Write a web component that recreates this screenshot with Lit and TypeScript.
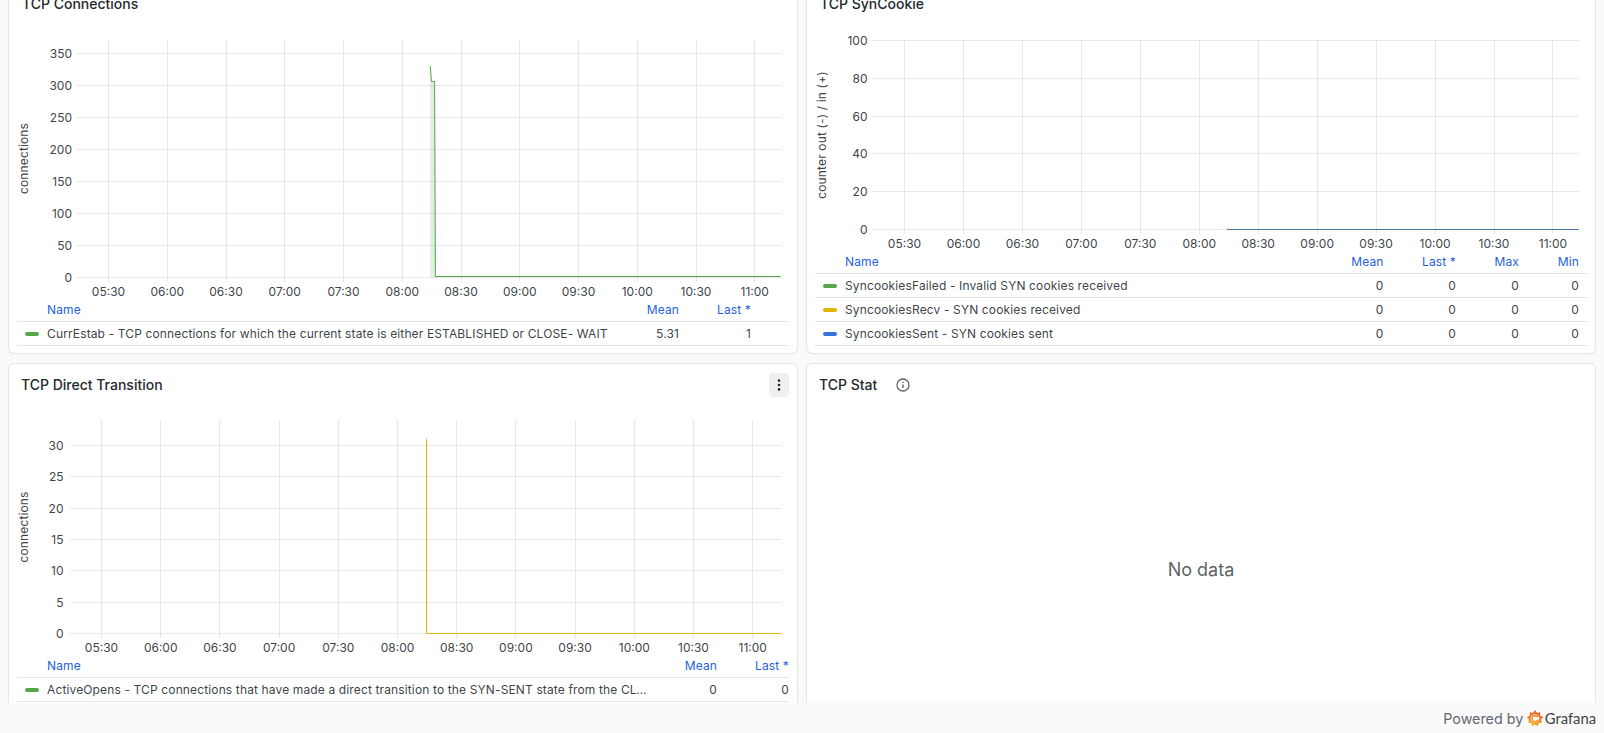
import { LitElement, html, svg, css } from 'lit';
import { customElement, property } from 'lit/decorators.js';

interface Series {
  color: string;
  // points are in page pixels, same space as the chart's viewBox
  points: string;
  fill?: string;
}

interface ChartConfig {
  ox: number;
  oy: number;
  height: number;
  left: number;
  right: number;
  top: number;
  zero: number;
  yStep: number;
  yLabels: string[];
  labelX: number;
  axisLabel: string;
  axisX: number;
  axisY: number;
  x0: number;
  xStep: number;
  xLabelY: number;
  series: Series[];
}

interface LegendRow {
  color: string;
  name: string;
  values: string[];
}

const TIMES = ['05:30', '06:00', '06:30', '07:00', '07:30', '08:00', '08:30', '09:00', '09:30', '10:00', '10:30', '11:00'];
const BORDER_GREEN = '#56a64b';
const YELLOW = '#e0b400';
const BLUE = '#3274d9';

@customElement('ts-chart')
export class TsChart extends LitElement {
  static styles = css`
    :host { display: block; flex: none; }
    svg { display: block; }
    .grid { stroke: rgba(36, 41, 46, 0.105); stroke-width: 1; shape-rendering: crispEdges; }
    .tick { font: 400 12px Inter, sans-serif; fill: rgba(36, 41, 46, 0.9); }
    .axis { letter-spacing: 0.15px; }
    .data { fill: none; stroke-width: 1; }
  `;

  @property({ attribute: false }) config!: ChartConfig;

  render() {
    const c = this.config;
    const width = 788;
    return html`<svg width=${width} height=${c.height} viewBox="${c.ox} ${c.oy} ${width} ${c.height}">
      ${TIMES.map((t, i) => {
        const x = c.x0 + i * c.xStep;
        return svg`
          <line class="grid" x1=${x} x2=${x} y1=${c.top} y2=${c.zero + 4}></line>
          <text class="tick" x=${x} y=${c.xLabelY} text-anchor="middle" dominant-baseline="central">${t}</text>`;
      })}
      ${c.yLabels.map((t, i) => {
        const y = c.zero - i * c.yStep;
        return svg`
          <line class="grid" x1=${c.left} x2=${c.right} y1=${y} y2=${y}></line>
          <text class="tick" x=${c.labelX} y=${y} text-anchor="end" dominant-baseline="central">${t}</text>`;
      })}
      <text class="tick axis" transform="rotate(-90 ${c.axisX} ${c.axisY})" x=${c.axisX} y=${c.axisY}
        text-anchor="middle" dominant-baseline="central">${c.axisLabel}</text>
      ${c.series.map((s) => svg`
        ${s.fill ? svg`<path d=${s.fill} fill=${s.color} fill-opacity="0.18"></path>` : ''}
        <polyline class="data" points=${s.points} stroke=${s.color}></polyline>`)}
    </svg>`;
  }
}

@customElement('legend-table')
export class LegendTable extends LitElement {
  static styles = css`
    :host { display: block; flex: none; margin: 0 8px; font: 400 12px Inter, sans-serif; letter-spacing: 0.135px; color: rgba(36, 41, 46, 0.9); }
    .row { display: grid; height: 23px; align-items: center; border-bottom: 1px solid rgba(36, 41, 46, 0.12); white-space: nowrap; }
    .head { height: 24px; color: #1f62e0; }
    .name { display: flex; align-items: center; gap: 8px; padding-left: 8px; min-width: 0; }
    .head .name { padding-left: 30px; }
    .marker { flex: none; width: 14px; height: 4px; border-radius: 2px; }
    .label { overflow: hidden; text-overflow: ellipsis; }
    .num { text-align: right; }
  `;

  @property({ attribute: false }) columns: string[] = [];
  @property({ attribute: false }) rows: LegendRow[] = [];
  @property() widths = '';

  render() {
    const style = `grid-template-columns:${this.widths}`;
    return html`
      <div class="row head" style=${style}>
        <div class="name"><span class="label">Name</span></div>
        ${this.columns.map((c) => html`<div class="num">${c}</div>`)}
      </div>
      ${this.rows.map((r) => html`
        <div class="row" style=${style}>
          <div class="name">
            <span class="marker" style="background:${r.color}"></span>
            <span class="label">${r.name}</span>
          </div>
          ${r.values.map((v) => html`<div class="num">${v}</div>`)}
        </div>`)}
    `;
  }
}

const connectionsChart: ChartConfig = {
  ox: 9, oy: 24, height: 273,
  left: 77, right: 780.5, top: 40, zero: 277.5, yStep: 32,
  yLabels: ['0', '50', '100', '150', '200', '250', '300', '350'],
  labelX: 72,
  axisLabel: 'connections', axisX: 23, axisY: 158.5,
  x0: 108.5, xStep: 58.75, xLabelY: 291.5,
  series: [{
    color: BORDER_GREEN,
    points: '430.3,66 431.4,81.5 434.6,81.5 435.4,276.5 780.5,276.5',
    fill: 'M430.3 66L431.4 81.3L434.6 81.3L435.8 277.5L430.3 277.5Z',
  }],
};

const synCookieChart: ChartConfig = {
  ox: 807, oy: 24, height: 225,
  left: 873, right: 1579, top: 40, zero: 229.5, yStep: 37.8,
  yLabels: ['0', '20', '40', '60', '80', '100'],
  labelX: 867.5,
  axisLabel: 'counter out (-) / in (+)', axisX: 821, axisY: 135,
  x0: 904.5, xStep: 58.95, xLabelY: 243.5,
  series: [{ color: '#44779f', points: '1227,229.5 1579,229.5' }],
};

const directChart: ChartConfig = {
  ox: 9, oy: 404, height: 249,
  left: 69.5, right: 780.5, top: 420, zero: 633.5, yStep: 31.33,
  yLabels: ['0', '5', '10', '15', '20', '25', '30'],
  labelX: 63.5,
  axisLabel: 'connections', axisX: 23, axisY: 527,
  x0: 101.5, xStep: 59.2, xLabelY: 647.5,
  series: [{ color: YELLOW, points: '426.5,439 426.5,633.5 780.5,633.5' }],
};

@customElement('app-root')
export class AppRoot extends LitElement {
  static styles = css`
    :host { display: flex; flex-direction: column; height: 733px; overflow: hidden; background: #fafafa; color: #24292e; font-family: Inter, sans-serif; }
    .scroll { flex: 1; min-height: 0; overflow: hidden; }
    .grid { display: grid; grid-template-columns: 790px 790px; grid-template-rows: 371px 371px; column-gap: 8px; row-gap: 9px; margin: -17px 8px 0; }
    .panel { display: flex; flex-direction: column; box-sizing: border-box; background: #fff; border: 1px solid rgba(36, 41, 46, 0.12); border-radius: 6px; overflow: hidden; }
    .header { flex: none; display: flex; align-items: center; height: 40px; padding: 0 8px 0 13px; }
    .header.low { height: 38px; padding: 2px 8px 0 12px; }
    .title { font-size: 14px; font-weight: 500; line-height: 22px; white-space: nowrap; }
    .info { margin-left: 19px; color: #5f646b; display: block; }
    .menu { margin-left: auto; width: 20px; height: 24px; border-radius: 4px; background: #f0f0f0; display: flex; align-items: center; justify-content: center; }
    .nodata { flex: none; height: 330px; display: flex; align-items: center; justify-content: center; font-size: 18px; color: rgba(36, 41, 46, 0.75); }
    footer { flex: none; height: 30px; display: flex; align-items: center; justify-content: flex-end; padding-right: 8px; background: #fafafa; font-size: 14.3px; color: #626870; }
    .logo { margin-left: 4px; display: block; }
    .brand { margin-left: 1.5px; font: 400 14.8px Lato, sans-serif; color: #3d4248; }
  `;

  private logo() {
    // gear teeth around the ring, coloured by height so the mark runs orange to yellow
    const teeth = Array.from({ length: 9 }, (_, i) => {
      const a = (i * 40 * Math.PI) / 180;
      const pt = (r: number, off: number) =>
        `${(8 + r * Math.sin(a + off)).toFixed(2)},${(8.5 - r * Math.cos(a + off)).toFixed(2)}`;
      return `${pt(6, -0.34)} ${pt(8.2, 0)} ${pt(6, 0.34)}`;
    });
    return html`<svg class="logo" width="16" height="17" viewBox="0 0 16 17">
      <defs>
        <linearGradient id="gf" gradientUnits="userSpaceOnUse" x1="4" y1="17" x2="9" y2="0">
          <stop offset="0" stop-color="#fcc20d"></stop>
          <stop offset="0.4" stop-color="#f58a1f"></stop>
          <stop offset="1" stop-color="#ee5228"></stop>
        </linearGradient>
      </defs>
      ${teeth.map((p) => svg`<polygon points=${p} fill="url(#gf)"></polygon>`)}
      <circle cx="8" cy="8.5" r="5.2" fill="none" stroke="url(#gf)" stroke-width="1.9"></circle>
      <path d="M10.6 7.1A3 3 0 1 0 10.9 9.6" fill="none" stroke="url(#gf)" stroke-width="1.4"></path>
    </svg>`;
  }

  render() {
    return html`
      <div class="scroll">
        <div class="grid">
          <section class="panel">
            <div class="header"><div class="title">TCP Connections</div></div>
            <ts-chart .config=${connectionsChart}></ts-chart>
            <legend-table
              widths="minmax(0,1fr) 62px 72px 38px"
              .columns=${['Mean', 'Last *']}
              .rows=${[{ color: BORDER_GREEN, name: 'CurrEstab - TCP connections for which the current state is either ESTABLISHED or CLOSE- WAIT', values: ['5.31', '1'] }]}
            ></legend-table>
          </section>
          <section class="panel">
            <div class="header"><div class="title">TCP SynCookie</div></div>
            <ts-chart .config=${synCookieChart}></ts-chart>
            <legend-table
              widths="minmax(0,1fr) 72px 72.5px 63px 60px 8px"
              .columns=${['Mean', 'Last *', 'Max', 'Min']}
              .rows=${[
                { color: BORDER_GREEN, name: 'SyncookiesFailed - Invalid SYN cookies received', values: ['0', '0', '0', '0'] },
                { color: YELLOW, name: 'SyncookiesRecv - SYN cookies received', values: ['0', '0', '0', '0'] },
                { color: BLUE, name: 'SyncookiesSent - SYN cookies sent', values: ['0', '0', '0', '0'] },
              ]}
            ></legend-table>
          </section>
          <section class="panel">
            <div class="header low">
              <div class="title">TCP Direct Transition</div>
              <div class="menu">
                <svg width="4" height="12" viewBox="0 0 4 12" fill="#24292e">
                  <circle cx="2" cy="1.6" r="1.3"></circle>
                  <circle cx="2" cy="6" r="1.3"></circle>
                  <circle cx="2" cy="10.4" r="1.3"></circle>
                </svg>
              </div>
            </div>
            <ts-chart .config=${directChart}></ts-chart>
            <legend-table
              widths="minmax(0,1fr) 70px 72px"
              .columns=${['Mean', 'Last *']}
              .rows=${[{ color: BORDER_GREEN, name: 'ActiveOpens - TCP connections that have made a direct transition to the SYN-SENT state from the CLOSED state', values: ['0', '0'] }]}
            ></legend-table>
          </section>
          <section class="panel">
            <div class="header low">
              <div class="title">TCP Stat</div>
              <svg class="info" width="14" height="14" viewBox="0 0 14 14" fill="none" stroke="currentColor">
                <circle cx="7" cy="7" r="6" stroke-width="1.3"></circle>
                <line x1="7" y1="6.4" x2="7" y2="10" stroke-width="1.4"></line>
                <circle cx="7" cy="4.3" r="0.8" fill="currentColor" stroke="none"></circle>
              </svg>
            </div>
            <div class="nodata">No data</div>
          </section>
        </div>
      </div>
      <footer>
        <span>Powered by</span>
        ${this.logo()}
        <span class="brand">Grafana</span>
      </footer>
    `;
  }
}
